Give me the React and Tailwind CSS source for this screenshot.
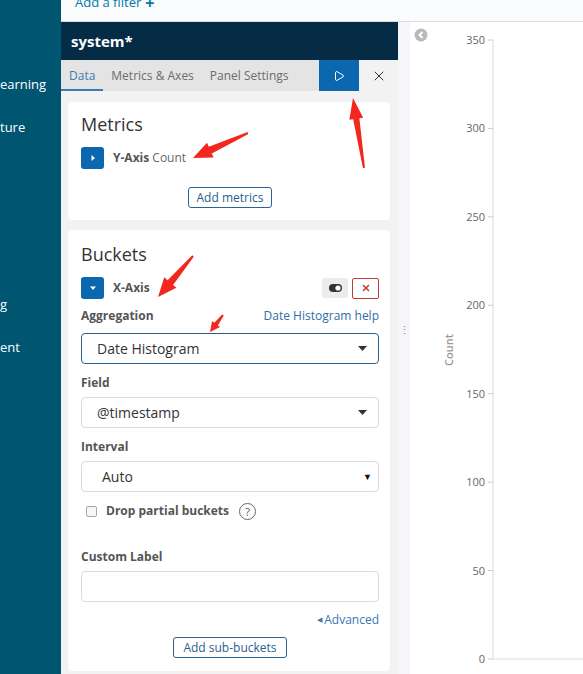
import React from 'react';
import { Play, X } from 'lucide-react';

const FONT = { fontFamily: '"Open Sans", "Liberation Sans", sans-serif' };

// red annotation arrows drawn over the screenshot
const arrows = [
  { tail: [248, 133], tip: [193, 158], hl: 19, hw: 8 },
  { tail: [364, 168], tip: [353, 98], hl: 21, hw: 7 },
  { tail: [193, 256], tip: [158, 297], hl: 19, hw: 8 },
  { tail: [223, 315], tip: [210, 332], hl: 10, hw: 5 },
];

const arrowPoints = ({ tail, tip, hl, hw }) => {
  const dx = tip[0] - tail[0];
  const dy = tip[1] - tail[1];
  const len = Math.hypot(dx, dy);
  const d = [dx / len, dy / len];
  const n = [-d[1], d[0]];
  const b = [tip[0] - d[0] * hl, tip[1] - d[1] * hl];
  const w0 = 1;
  const w1 = hw * 0.45;
  const p = (o, s, k) => `${o[0] + n[0] * s * k},${o[1] + n[1] * s * k}`;
  return [p(tail, 1, w0), p(b, 1, w1), p(b, 1, hw), `${tip[0]},${tip[1]}`, p(b, -1, hw), p(b, -1, w1), p(tail, -1, w0)].join(' ');
};

const ticks = [350, 300, 250, 200, 150, 100, 50, 0];

function Caret({ dir = 'right' }) {
  return (
    <svg width="8" height="8" viewBox="0 0 8 8">
      {dir === 'right' ? <polygon points="2.5,1 6,4 2.5,7" fill="#fff" /> : <polygon points="1,2.5 7,2.5 4,6" fill="#fff" />}
    </svg>
  );
}

function DownCaret() {
  return (
    <svg width="9" height="5" viewBox="0 0 9 5">
      <polygon points="0,0 9,0 4.5,5" fill="#333" />
    </svg>
  );
}

function Select({ value, focused, pl = 'pl-[15px]', caret }) {
  return (
    <div className={`h-[31px] rounded-[4px] border bg-white flex items-center justify-between ${pl} pr-[11px] ${focused ? 'border-[#2a5f8c]' : 'border-[#dcdcdc]'}`}>
      <span className="text-[14px] text-[#333]">{value}</span>
      {caret || <DownCaret />}
    </div>
  );
}

export default function App() {
  return (
    <div className="relative flex w-[583px] h-[674px] overflow-hidden bg-white" style={FONT}>
      {/* Side nav (scrolled, only the word endings show) */}
      <aside className="w-[61px] shrink-0 bg-[#005571] overflow-hidden text-white text-[13px] leading-[20px]">
        <div className="mt-[74px] whitespace-nowrap">earning</div>
        <div className="mt-[23px] whitespace-nowrap">ture</div>
        <div className="mt-[157px] whitespace-nowrap">g</div>
        <div className="mt-[23px] whitespace-nowrap">ent</div>
      </aside>

      <div className="flex-1 flex flex-col">
        {/* Filter bar */}
        <div className="h-[22px] shrink-0 bg-[#fafbfd] border-b border-[#d9dde3] overflow-hidden pl-[14px]">
          <div className="-mt-[7px] text-[13px] text-[#0079a5] flex items-center gap-1">
            Add a filter <span className="font-bold text-[16px] leading-none">+</span>
          </div>
        </div>

        <div className="flex flex-1 min-h-0">
          {/* Editor panel */}
          <div className="w-[337px] shrink-0 flex flex-col">
            <div className="h-[38px] bg-[#062b45] flex items-center pl-[10px]">
              <span className="text-white font-bold text-[15px]">system*</span>
            </div>
            <div className="h-[31px] flex bg-[#e4e4e4]">
              <div className="flex-1 flex items-stretch text-[12px]">
                <div className="px-[8px] flex items-center text-[#3d7bb2] border-b-2 border-[#3d7bb2] pt-[2px]">Data</div>
                <div className="px-[8px] flex items-center text-[#6b6b6b]">Metrics &amp; Axes</div>
                <div className="px-[8px] flex items-center text-[#6b6b6b]">Panel Settings</div>
              </div>
              <div className="w-[40px] bg-[#0b67ae] flex items-center justify-center">
                <Play size={12} color="#fff" strokeWidth={2} />
              </div>
              <div className="w-[39px] bg-[#f2f2f2] flex items-center justify-center">
                <X size={16} color="#333" strokeWidth={1.5} />
              </div>
            </div>

            <div className="flex-1 bg-[#f2f2f2] pl-[7px] pr-[8px] pt-[11px]">
              {/* Metrics */}
              <div className="bg-white rounded-[4px] pl-[13px] pr-[11px] pt-[10px] pb-[12px]">
                <h3 className="text-[18px] leading-[24px] text-[#333]">Metrics</h3>
                <div className="mt-[11px] flex items-center gap-[9px]">
                  <div className="w-[23px] h-[22px] rounded-[3px] bg-[#0b67ae] flex items-center justify-center"><Caret /></div>
                  <span className="text-[12px] text-[#666]"><b className="text-[#555]">Y-Axis</b> Count</span>
                </div>
                <div className="mt-[18px] flex justify-center">
                  <button className="h-[21px] px-[8px] rounded-[3px] border border-[#2a6496] text-[12px] text-[#2a5f8c] leading-none">Add metrics</button>
                </div>
              </div>

              {/* Buckets */}
              <div className="mt-[10px] bg-white rounded-[4px] pl-[13px] pr-[11px] pt-[12px] pb-[13px]">
                <h3 className="text-[18px] leading-[24px] text-[#333]">Buckets</h3>
                <div className="mt-[11px] flex items-center">
                  <div className="w-[23px] h-[22px] rounded-[3px] bg-[#0b67ae] flex items-center justify-center"><Caret dir="down" /></div>
                  <b className="ml-[9px] text-[12px] text-[#555]">X-Axis</b>
                  <div className="ml-auto w-[26px] h-[20px] bg-[#ececec] rounded-[2px] flex items-center justify-center">
                    <svg width="13" height="8" viewBox="0 0 13 8">
                      <rect x="0" y="0" width="13" height="8" rx="4" fill="#333" />
                      <circle cx="9" cy="4" r="2.6" fill="#fff" />
                    </svg>
                  </div>
                  <div className="ml-[4px] w-[27px] h-[21px] border border-[#c23b32] rounded-[2px] flex items-center justify-center">
                    <X size={10} color="#c23b32" strokeWidth={3.5} />
                  </div>
                </div>

                <div className="mt-[9px] flex justify-between text-[12px] leading-[16px]">
                  <b className="text-[#555]">Aggregation</b>
                  <span className="text-[#2f6ea8]">Date Histogram help</span>
                </div>
                <div className="mt-[9px]"><Select value="Date Histogram" focused /></div>

                <div className="mt-[11px] text-[12px] leading-[16px] font-bold text-[#555]">Field</div>
                <div className="mt-[6px]"><Select value="@timestamp" /></div>

                <div className="mt-[11px] text-[12px] leading-[16px] font-bold text-[#555]">Interval</div>
                <div className="mt-[6px]">
                  <Select value="Auto" pl="pl-[20px]" caret={<span className="text-[9px] text-[#111] -mr-[5px]">▼</span>} />
                </div>

                <div className="mt-[11px] flex items-center h-[16px] pl-[5px]">
                  <span className="w-[11px] h-[11px] rounded-[2px] border border-[#a8a8a8] bg-[#f7f7f7]" />
                  <b className="ml-[9px] text-[12px] text-[#555]">Drop partial buckets</b>
                  <span className="ml-[10px] w-[17px] h-[17px] rounded-full border border-[#666] flex items-center justify-center text-[11px] text-[#555] leading-none">?</span>
                </div>

                <div className="mt-[30px] text-[12px] leading-[16px] font-bold text-[#555]">Custom Label</div>
                <div className="mt-[6px] h-[31px] rounded-[4px] border border-[#dcdcdc] bg-white" />

                <div className="mt-[10px] flex justify-end items-center text-[12px] leading-[16px] text-[#3a77b3]">
                  <span className="text-[7px] mr-[2px]">◀</span>Advanced
                </div>
                <div className="mt-[9px] flex justify-center">
                  <button className="h-[21px] px-[9px] rounded-[3px] border border-[#2a6496] text-[12px] text-[#2a5f8c] leading-none">Add sub-buckets</button>
                </div>
              </div>
            </div>
          </div>

          {/* Resize handle */}
          <div className="w-[12px] shrink-0 bg-[#f5f6fa] flex items-center justify-center">
            <span className="text-[#888] text-[11px] leading-none -mt-[38px]">⋮</span>
          </div>

          {/* Chart */}
          <div className="flex-1 bg-white">
            <svg width="173" height="652" viewBox="0 0 173 652" style={FONT}>
              <circle cx="11" cy="13" r="6.5" fill="#b9b9b9" />
              <polyline points="12.5,10 9.5,13 12.5,16" fill="none" stroke="#fff" strokeWidth="2" />
              <line x1="83" y1="18" x2="83" y2="637" stroke="#dcdcdc" strokeWidth="1" />
              <line x1="83" y1="637" x2="173" y2="637" stroke="#dcdcdc" strokeWidth="1" />
              {ticks.map((t, i) => {
                const y = 18 + i * (619 / 7);
                return (
                  <g key={t}>
                    <line x1="78" y1={y} x2="83" y2={y} stroke="#ccc" />
                    <text x="75" y={y + 4} textAnchor="end" fontSize="11" fill="#666">{t}</text>
                  </g>
                );
              })}
              <text x="0" y="0" transform="translate(43 328) rotate(-90)" textAnchor="middle" fontSize="11" fontWeight="600" fill="#999">Count</text>
            </svg>
          </div>
        </div>
      </div>

      {/* Annotation arrows */}
      <svg className="absolute left-0 top-0 pointer-events-none" width="583" height="674">
        {arrows.map((a, i) => (
          <polygon key={i} points={arrowPoints(a)} fill="#f2281e" />
        ))}
      </svg>
    </div>
  );
}
